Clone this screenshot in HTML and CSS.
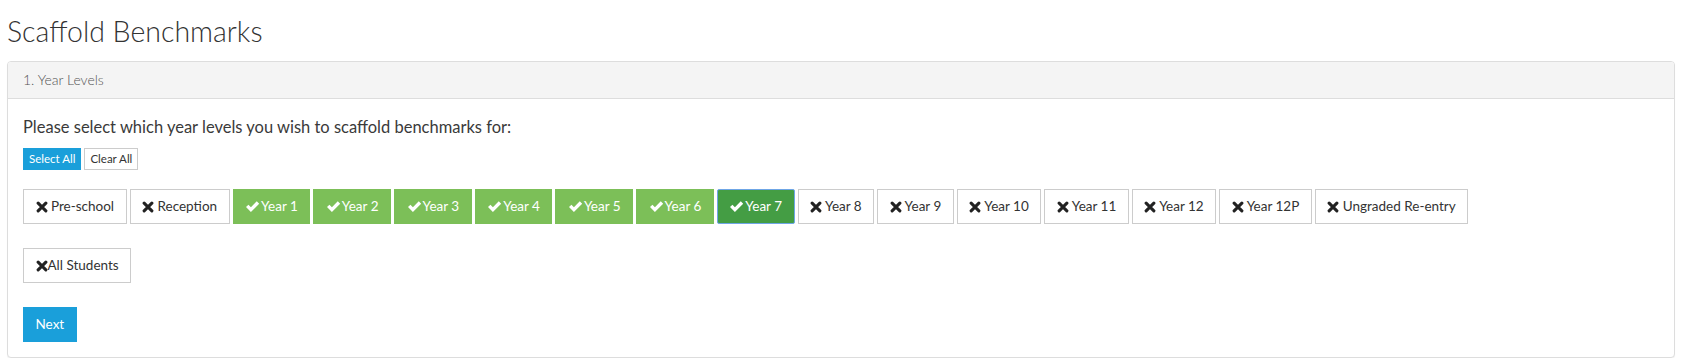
FILE: index.html
```html
<!DOCTYPE html>
<html>
<head>
  <link rel="stylesheet" href="styles.css">
</head>
<body>
  <h1 class="page-title">Scaffold Benchmarks</h1>

  <div class="panel">
    <div class="panel-heading">1. Year Levels</div>
    <div class="panel-body">
      <p class="prompt">Please select which year levels you wish to scaffold benchmarks for:</p>

      <div class="quick-actions">
        <button class="btn-xs btn-primary">Select All</button>
        <button class="btn-xs btn-default">Clear All</button>
      </div>

      <div class="level-row">
        <button class="btn btn-default"><svg class="icon-x" viewBox="0 0 14 14"><path d="M2.5 2.5L11.5 11.5M11.5 2.5L2.5 11.5"/></svg> Pre-school</button>
        <button class="btn btn-default"><svg class="icon-x" viewBox="0 0 14 14"><path d="M2.5 2.5L11.5 11.5M11.5 2.5L2.5 11.5"/></svg> Reception</button>
        <button class="btn btn-success"><svg class="icon-check" viewBox="0 0 16 14"><path d="M1 7.6L3.6 5 6.3 7.7 12.6 1.4 15.2 4 6.3 12.9Z"/></svg>Year 1</button>
        <button class="btn btn-success"><svg class="icon-check" viewBox="0 0 16 14"><path d="M1 7.6L3.6 5 6.3 7.7 12.6 1.4 15.2 4 6.3 12.9Z"/></svg>Year 2</button>
        <button class="btn btn-success"><svg class="icon-check" viewBox="0 0 16 14"><path d="M1 7.6L3.6 5 6.3 7.7 12.6 1.4 15.2 4 6.3 12.9Z"/></svg>Year 3</button>
        <button class="btn btn-success"><svg class="icon-check" viewBox="0 0 16 14"><path d="M1 7.6L3.6 5 6.3 7.7 12.6 1.4 15.2 4 6.3 12.9Z"/></svg>Year 4</button>
        <button class="btn btn-success"><svg class="icon-check" viewBox="0 0 16 14"><path d="M1 7.6L3.6 5 6.3 7.7 12.6 1.4 15.2 4 6.3 12.9Z"/></svg>Year 5</button>
        <button class="btn btn-success"><svg class="icon-check" viewBox="0 0 16 14"><path d="M1 7.6L3.6 5 6.3 7.7 12.6 1.4 15.2 4 6.3 12.9Z"/></svg>Year 6</button>
        <button class="btn btn-success focused"><svg class="icon-check" viewBox="0 0 16 14"><path d="M1 7.6L3.6 5 6.3 7.7 12.6 1.4 15.2 4 6.3 12.9Z"/></svg>Year 7</button>
        <button class="btn btn-default"><svg class="icon-x" viewBox="0 0 14 14"><path d="M2.5 2.5L11.5 11.5M11.5 2.5L2.5 11.5"/></svg> Year 8</button>
        <button class="btn btn-default"><svg class="icon-x" viewBox="0 0 14 14"><path d="M2.5 2.5L11.5 11.5M11.5 2.5L2.5 11.5"/></svg> Year 9</button>
        <button class="btn btn-default"><svg class="icon-x" viewBox="0 0 14 14"><path d="M2.5 2.5L11.5 11.5M11.5 2.5L2.5 11.5"/></svg> Year 10</button>
        <button class="btn btn-default"><svg class="icon-x" viewBox="0 0 14 14"><path d="M2.5 2.5L11.5 11.5M11.5 2.5L2.5 11.5"/></svg> Year 11</button>
        <button class="btn btn-default"><svg class="icon-x" viewBox="0 0 14 14"><path d="M2.5 2.5L11.5 11.5M11.5 2.5L2.5 11.5"/></svg> Year 12</button>
        <button class="btn btn-default"><svg class="icon-x" viewBox="0 0 14 14"><path d="M2.5 2.5L11.5 11.5M11.5 2.5L2.5 11.5"/></svg> Year 12P</button>
        <button class="btn btn-default"><svg class="icon-x" viewBox="0 0 14 14"><path d="M2.5 2.5L11.5 11.5M11.5 2.5L2.5 11.5"/></svg> Ungraded Re-entry</button>
      </div>

      <div class="level-row">
        <button class="btn btn-default"><svg class="icon-x" viewBox="0 0 14 14"><path d="M2.5 2.5L11.5 11.5M11.5 2.5L2.5 11.5"/></svg>All Students</button>
      </div>

      <div class="level-row">
        <button class="btn btn-primary">Next</button>
      </div>
    </div>
  </div>
</body>
</html>
```

FILE: styles.css
```css
body {
  margin: 0;
  padding: 0 7px;
  background: white;
  font-family: Lato, "Noto Sans", sans-serif;
  color: #333;
}

.page-title {
  margin: 11px 0 10px;
  font-size: 28.5px;
  font-weight: 300;
  line-height: 40px;
  color: #333;
}

.panel {
  border: 1px solid #ddd;
  border-radius: 4px;
  box-shadow: 0 1px 1px rgba(0,0,0,0.05);
  background: white;
}

.panel-heading {
  padding: 9px 15px;
  height: 18px;
  line-height: 18px;
  background: #f4f4f4;
  border-bottom: 1px solid #ddd;
  border-radius: 3px 3px 0 0;
  font-size: 14px;
  font-weight: 300;
  color: #555;
}

.panel-body {
  padding: 15px;
  display: flex;
  flex-direction: column;
}

.prompt {
  margin: 0 0 8px;
  font-size: 16.5px;
  line-height: 26px;
  color: #3a3a3a;
}

.quick-actions {
  display: flex;
  gap: 3px;
  margin-bottom: 19px;
}

.level-row {
  display: flex;
  gap: 3px;
  margin-bottom: 24px;
}

.level-row:last-child {
  margin-bottom: 0;
}

button {
  font-family: inherit;
  cursor: pointer;
}

.btn-xs {
  padding: 1px 5px;
  font-size: 11.5px;
  line-height: 18px;
  border: 1px solid #ccc;
}

.btn {
  display: flex;
  align-items: center;
  padding: 6px 11.5px;
  font-size: 13.5px;
  line-height: 21px;
  border: 1px solid #ccc;
  border-radius: 0;
  white-space: pre;
}

.btn-default {
  background: white;
  color: #333;
}

.btn-primary {
  background: #1a9fda;
  border-color: #1a9fda;
  color: white;
}

.btn-success {
  background: #7cbf58;
  border-color: #7cbf58;
  color: white;
}

.btn-success.focused {
  background: #449d44;
  border-color: #6fa6e6;
  border-radius: 2px;
}

.icon-x {
  width: 12px;
  height: 12px;
  fill: none;
  stroke: #222;
  stroke-width: 3.6;
  stroke-linecap: round;
}

.icon-check {
  width: 15px;
  height: 13px;
  fill: white;
  margin-right: 1px;
}
```
